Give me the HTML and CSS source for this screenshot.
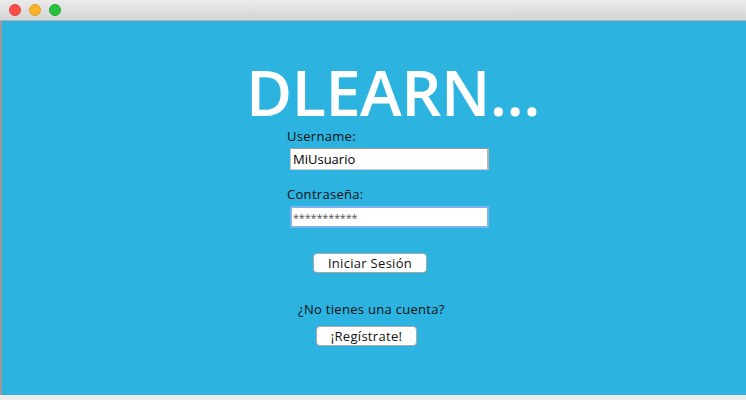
FILE: index.html
```html
<!DOCTYPE html>
<html>
<head>
<meta charset="utf-8">
<link rel="stylesheet" href="styles.css">
</head>
<body>
<div class="window">
  <div class="titlebar">
    <span class="light red"></span>
    <span class="light yellow"></span>
    <span class="light green"></span>
  </div>
  <div class="content">
    <h1 class="title">DLEARN...</h1>
    <div class="form">
      <label class="label">Username:</label>
      <div class="field">MiUsuario</div>
      <label class="label label-pass">Contraseña:</label>
      <div class="field field-focus"><span class="stars">***********</span></div>
      <div class="btn btn-login">Iniciar Sesión</div>
      <p class="question">¿No tienes una cuenta?</p>
      <div class="btn btn-register">¡Regístrate!</div>
    </div>
  </div>
  <div class="footer"></div>
</div>
</body>
</html>
```

FILE: styles.css
```css
* { box-sizing: border-box; }
html, body { margin: 0; padding: 0; }
body {
  font-family: "Open Sans", "DejaVu Sans", sans-serif;
  background: #ececec;
}
.window {
  width: 746px;
  height: 400px;
  display: flex;
  flex-direction: column;
  overflow: hidden;
}
.titlebar {
  height: 21px;
  flex: none;
  background: linear-gradient(#ebebeb, #d4d4d4);
  border-bottom: 1px solid #b4b4b4;
  display: flex;
  align-items: center;
  gap: 8px;
  padding-left: 9px;
  padding-bottom: 1px;
}
.light {
  width: 12px;
  height: 12px;
  border-radius: 50%;
}
.red { background: #fc4d4b; border: 1px solid #e0443e; }
.yellow { background: #fdb22b; border: 1px solid #dea123; }
.green { background: #29c23f; border: 1px solid #1fa52e; }
.content {
  flex: 1;
  background: #2cb3e0;
  border-left: 2px solid #9a9a9a;
  display: flex;
  flex-direction: column;
}
.footer {
  height: 5px;
  flex: none;
  background: #ececec;
}
.title {
  margin: 43px 0 0 244px;
  font-family: "Open Sans", sans-serif;
  font-weight: 600;
  font-size: 63px;
  line-height: 56px;
  color: #ffffff;
  letter-spacing: -0.5px;
}
.form {
  display: flex;
  flex-direction: column;
  align-items: flex-start;
  padding-left: 285px;
  font-size: 13px;
  color: #111;
  letter-spacing: 0.3px;
}
.label {
  display: block;
  line-height: 16px;
  margin-top: 8px;
}
.label-pass { margin-top: 16px; }
.field {
  margin-top: 4px;
  margin-left: 3px;
  width: 199px;
  height: 22px;
  background: #fff;
  border-top: 1px solid #9a9a9a;
  border-left: 1px solid #c4c4c4;
  border-right: 2px solid #b5b5b5;
  border-bottom: 1px solid #d0d0d0;
  padding-left: 2px;
  line-height: 20px;
  font-size: 13px;
  color: #000;
  letter-spacing: 0;
}
.field-focus {
  border: 2px solid #7fb3ee;
  padding-left: 1px;
  line-height: 18px;
}
.stars { color: #555; font-size: 11px; letter-spacing: -0.2px; }
.btn {
  background: #fff;
  border: 1px solid #a8a8a8;
  border-radius: 4px;
  height: 20px;
  line-height: 18px;
  text-align: center;
  font-size: 13px;
  color: #111;
}
.btn-login {
  margin-top: 25px;
  margin-left: 26px;
  width: 114px;
}
.question {
  margin: 28px 0 0 11px;
  line-height: 16px;
}
.btn-register {
  margin-top: 9px;
  margin-left: 29px;
  width: 101px;
}
```
